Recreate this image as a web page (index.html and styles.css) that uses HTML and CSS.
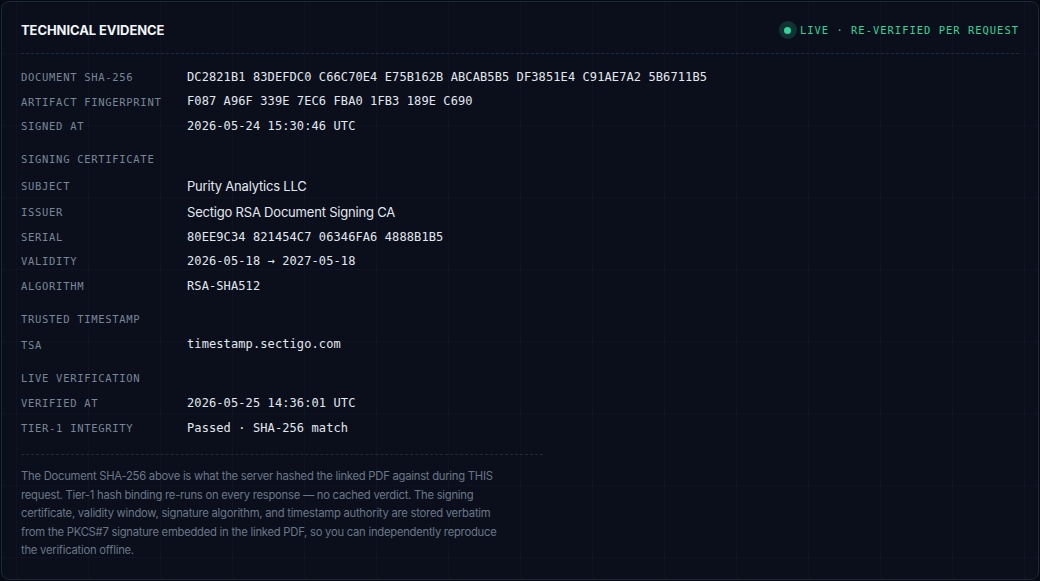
FILE: index.html
```html
<!DOCTYPE html>
<html lang="en">
<head>
<meta charset="utf-8">
<title>Technical Evidence</title>
<link rel="stylesheet" href="styles.css">
</head>
<body>
<section class="card">
  <header class="card-head">
    <h2 class="title">TECHNICAL EVIDENCE</h2>
    <div class="live">
      <span class="live-dot"><span class="live-core"></span></span>
      <span class="live-text">LIVE · RE-VERIFIED PER REQUEST</span>
    </div>
  </header>

  <div class="evidence">
    <div class="row"><span class="label">DOCUMENT SHA-256</span><span class="value mono">DC2821B1 83DEFDC0 C66C70E4 E75B162B ABCAB5B5 DF3851E4 C91AE7A2 5B6711B5</span></div>
    <div class="row"><span class="label">ARTIFACT FINGERPRINT</span><span class="value mono">F087 A96F 339E 7EC6 FBA0 1FB3 189E C690</span></div>
    <div class="row"><span class="label">SIGNED AT</span><span class="value mono">2026-05-24 15:30:46 UTC</span></div>

    <div class="section">SIGNING CERTIFICATE</div>
    <div class="row"><span class="label">SUBJECT</span><span class="value sans">Purity Analytics LLC</span></div>
    <div class="row"><span class="label">ISSUER</span><span class="value sans">Sectigo RSA Document Signing CA</span></div>
    <div class="row"><span class="label">SERIAL</span><span class="value mono">80EE9C34 821454C7 06346FA6 4888B1B5</span></div>
    <div class="row"><span class="label">VALIDITY</span><span class="value mono">2026-05-18 → 2027-05-18</span></div>
    <div class="row"><span class="label">ALGORITHM</span><span class="value mono">RSA-SHA512</span></div>

    <div class="section">TRUSTED TIMESTAMP</div>
    <div class="row"><span class="label">TSA</span><span class="value mono">timestamp.sectigo.com</span></div>

    <div class="section">LIVE VERIFICATION</div>
    <div class="row"><span class="label">VERIFIED AT</span><span class="value mono">2026-05-25 14:36:01 UTC</span></div>
    <div class="row"><span class="label">TIER-1 INTEGRITY</span><span class="value mono">Passed · SHA-256 match</span></div>
  </div>

  <div class="note">
    <p class="note-text">The Document SHA-256 above is what the server hashed the linked PDF against during THIS request. Tier-1 hash binding re-runs on every response — no cached verdict. The signing certificate, validity window, signature algorithm, and timestamp authority are stored verbatim from the PKCS#7 signature embedded in the linked PDF, so you can independently reproduce the verification offline.</p>
  </div>
</section>
</body>
</html>
```

FILE: styles.css
```css
* { box-sizing: border-box; }

html, body {
  margin: 0;
  padding: 0;
  background: #060a12;
}

body {
  padding: 1px;
  height: 100vh;
}

.card {
  height: 100%;
  border: 1px solid #1b2838;
  border-radius: 8px;
  padding: 19px 19px 20px;
  background-color: #0a0f1b;
  background-image:
    linear-gradient(to right, rgba(40, 52, 84, 0.13) 1px, transparent 1px),
    linear-gradient(to bottom, rgba(40, 52, 84, 0.13) 1px, transparent 1px);
  background-size: 72px 72px;
  background-position: 14px 51px;
  font-family: Inter, "Noto Sans", sans-serif;
  color: #e2e8f0;
}

.card-head {
  display: flex;
  align-items: center;
  justify-content: space-between;
  height: 18px;
  box-sizing: content-box;
  padding-bottom: 14px;
  border-bottom: 1px dashed #1f2a3a;
}

.title {
  margin: 0;
  font-size: 13px;
  font-weight: 700;
  letter-spacing: -0.08px;
  color: #f1f5f9;
  line-height: 18px;
}

.live {
  display: flex;
  align-items: center;
  gap: 3px;
}

.live-dot {
  width: 18px;
  height: 18px;
  border-radius: 50%;
  background: rgba(52, 211, 153, 0.18);
  display: flex;
  align-items: center;
  justify-content: center;
}

.live-core {
  width: 7px;
  height: 7px;
  border-radius: 50%;
  background: #34d399;
}

.live-text {
  font-family: "DejaVu Sans Mono", monospace;
  font-size: 10.5px;
  letter-spacing: 0.98px;
  color: #34d399;
  line-height: 14px;
}

.evidence {
  margin-top: 10.75px;
  display: flex;
  flex-direction: column;
}

.row {
  display: flex;
  align-items: center;
  padding: 5px 0;
  min-height: 24.5px;
}

.label, .section {
  font-family: "DejaVu Sans Mono", monospace;
  font-size: 10.5px;
  letter-spacing: 0.7px;
  color: #7a8698;
  line-height: 14px;
}

.label {
  width: 166px;
  flex: none;
}

.section {
  margin-top: 8.75px;
  padding: 5px 0 6.5px;
}

.value {
  color: #e2e8f0;
}

.value.mono {
  font-family: "DejaVu Sans Mono", monospace;
  font-size: 12px;
  letter-spacing: 0.1px;
  line-height: 14.5px;
}

.value.sans {
  font-family: Inter, "Noto Sans", sans-serif;
  font-size: 13px;
  letter-spacing: -0.2px;
  line-height: 16px;
}

.note {
  width: 522px;
  margin-top: 14px;
  border-top: 1px dashed #1f2a3a;
  padding-top: 12px;
}

.note-text {
  margin: 0;
  max-width: 482px;
  font-size: 11.25px;
  letter-spacing: -0.25px;
  line-height: 18.5px;
  color: #6b7789;
}
```
